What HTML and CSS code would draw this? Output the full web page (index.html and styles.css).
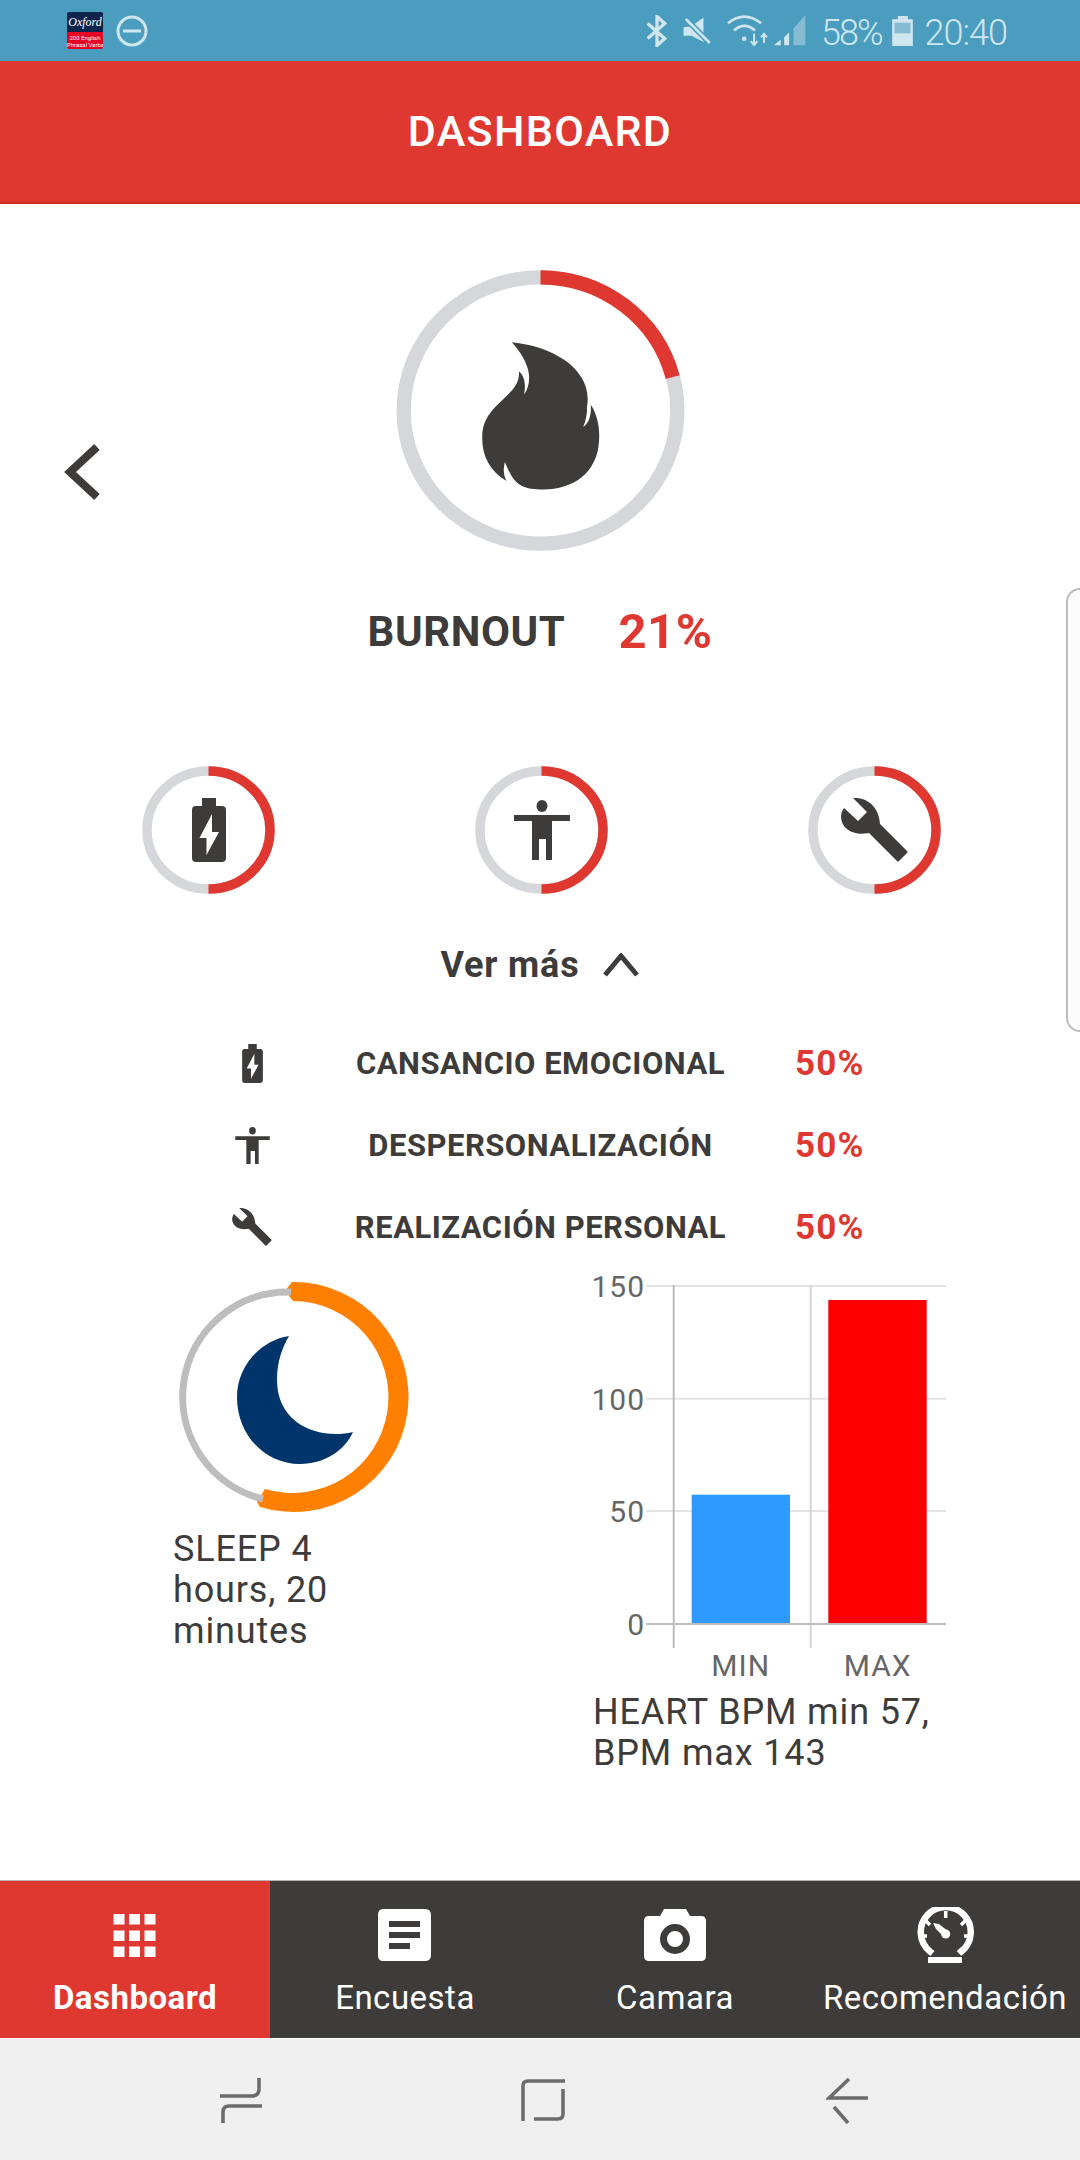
FILE: index.html
```html
<!DOCTYPE html>
<html>
<head>
  <meta charset="UTF-8">
  <title>Dashboard</title>
  <link rel="stylesheet" href="styles.css">
</head>
<body>
  <svg class="defs" width="0" height="0">
    <symbol id="icon-battery" viewBox="0 0 34 64">
      <path fill="#3d3c3a" fill-rule="evenodd" d="M10 0H24V8H30Q34 8 34 12V60Q34 64 30 64H4Q0 64 0 60V12Q0 8 4 8H10ZM20 16L7.5 40H14.5V57L27 34H20Z"/>
    </symbol>
    <symbol id="icon-person" viewBox="0 0 56 60">
      <ellipse cx="28" cy="6" rx="5.5" ry="6" fill="#3d3c3a"/>
      <path fill="#3d3c3a" d="M0 15H56V21H38V60H32V39H25V60H18V21H0Z"/>
    </symbol>
    <symbol id="icon-wrench" viewBox="0 0 67 64">
      <path fill="#3d3c3a" d="M12 0C24 -1 38 7 39 26L66 53Q67 54 66 55L58 63Q57 64 56 63L28 35C14 38 0 32 0 18Q0 14 3 10L17 23L26 14Z"/>
    </symbol>
  </svg>

  <div class="screen">
    <!-- Status bar -->
    <div class="status-bar">
      <div class="app-badge">
        <div class="badge-top">Oxford</div>
        <div class="badge-bottom">200 English<br>Phrasal Verbs</div>
      </div>
      <svg class="dnd" width="32" height="32" viewBox="0 0 32 32">
        <circle cx="16" cy="16" r="14" fill="none" stroke="#cfe6ee" stroke-width="3"/>
        <path d="M7 16H25" stroke="#cfe6ee" stroke-width="3"/>
      </svg>
      <div class="status-right">
        <svg class="st-bt" width="22" height="32" viewBox="52 45 66 95">
          <path d="M57 70L108 115L85 136V49L108 70L57 115" fill="none" stroke="#cfe6ee" stroke-width="10"/>
        </svg>
        <svg class="st-mute" width="30" height="30" viewBox="160 45 95 90">
          <path d="M165 78L190 75L228 47V125L190 105H165Z" fill="#cfe6ee"/>
          <path d="M172 52L248 128" stroke="#4a9dbf" stroke-width="18"/>
          <path d="M172 52L248 128" stroke="#cfe6ee" stroke-width="8"/>
        </svg>
        <svg class="st-wifi" width="43" height="33" viewBox="295 40 130 100">
          <path d="M301 68Q350 28 401 68M319 90Q350 62 383 90" fill="none" stroke="#cfe6ee" stroke-width="8"/>
          <circle cx="350" cy="115" r="7" fill="#cfe6ee"/>
          <path d="M380 100V132M370 122L380 134L390 122M410 128V102M401 111L410 100L419 111" fill="none" stroke="#cfe6ee" stroke-width="6"/>
        </svg>
        <svg class="st-signal" width="32" height="31" viewBox="440 45 95 92">
          <path d="M440 135L460 118V135Z" fill="#cfe6ee"/>
          <path d="M470 110L485 97V135H470Z" fill="#cfe6ee"/>
          <path d="M498 85L533 45V135H498Z" fill="#85bcd4"/>
        </svg>
        <span class="st-text st-percent">58%</span>
        <svg class="st-battery" width="21" height="30" viewBox="783 45 62 90">
          <path d="M800 45H830V55H845V135H783V55H800Z" fill="#cfe6ee"/>
          <rect x="790" y="65" width="48" height="32" fill="#85bcd4"/>
        </svg>
        <span class="st-text st-clock">20:40</span>
      </div>
    </div>

    <div class="app-header">DASHBOARD</div>

    <div class="content">
      <!-- Burnout ring -->
      <div class="hero">
        <svg class="back-arrow" width="38" height="58" viewBox="0 0 38 58">
          <polyline points="35,4 8,29 35,54" fill="none" stroke="#3d3c3a" stroke-width="8"/>
        </svg>
        <svg class="hero-ring" width="291" height="283" viewBox="165 88 874 850">
          <ellipse cx="602" cy="513" rx="411" ry="400" fill="none" stroke="#d6d7db" stroke-width="43"/>
          <path d="M602 113A411 400 0 0 1 999 413" fill="none" stroke="#df3831" stroke-width="43"/>
          <path fill="#3d3c3a" d="M516 308C640 320 760 390 742 500C742 525 738 545 730 562C750 550 755 520 753 495C775 530 780 570 778 600C775 700 700 750 610 750C540 752 520 730 495 668C490 690 490 705 500 725C450 695 425 650 427 590C428 490 545 470 537 395C555 410 558 435 553 465C575 430 580 380 516 308Z"/>
        </svg>
        <span></span>
      </div>

      <div class="burnout-title">
        <span class="burnout-name">BURNOUT</span>
        <span class="burnout-value">21%</span>
      </div>

      <!-- Sub scores -->
      <div class="mini-rings">
        <div class="mini-ring">
          <svg class="ring-svg" width="133" height="128" viewBox="0 0 133 128">
            <ellipse cx="66.5" cy="64" rx="61.5" ry="59" fill="none" stroke="#d6d7db" stroke-width="9.5"/>
            <path d="M66.5 5A61.5 59 0 0 1 66.5 123" fill="none" stroke="#df3831" stroke-width="9.5"/>
          </svg>
          <svg class="ring-icon" width="34" height="64"><use href="#icon-battery"/></svg>
        </div>
        <div class="mini-ring">
          <svg class="ring-svg" width="133" height="128" viewBox="0 0 133 128">
            <ellipse cx="66.5" cy="64" rx="61.5" ry="59" fill="none" stroke="#d6d7db" stroke-width="9.5"/>
            <path d="M66.5 5A61.5 59 0 0 1 66.5 123" fill="none" stroke="#df3831" stroke-width="9.5"/>
          </svg>
          <svg class="ring-icon" width="56" height="60"><use href="#icon-person"/></svg>
        </div>
        <div class="mini-ring">
          <svg class="ring-svg" width="133" height="128" viewBox="0 0 133 128">
            <ellipse cx="66.5" cy="64" rx="61.5" ry="59" fill="none" stroke="#d6d7db" stroke-width="9.5"/>
            <path d="M66.5 5A61.5 59 0 0 1 66.5 123" fill="none" stroke="#df3831" stroke-width="9.5"/>
          </svg>
          <svg class="ring-icon" width="67" height="64"><use href="#icon-wrench"/></svg>
        </div>
      </div>

      <div class="see-more">
        <span>Ver más</span>
        <svg width="36" height="24" viewBox="0 0 36 24">
          <polyline points="2,22 18,3 34,22" fill="none" stroke="#3d3c3a" stroke-width="5"/>
        </svg>
      </div>

      <div class="score-list">
        <div class="score-icon"><svg width="21" height="39"><use href="#icon-battery"/></svg></div>
        <div class="score-label">CANSANCIO EMOCIONAL</div>
        <div class="score-value">50%</div>
        <div class="score-icon"><svg width="35" height="37"><use href="#icon-person"/></svg></div>
        <div class="score-label">DESPERSONALIZACIÓN</div>
        <div class="score-value">50%</div>
        <div class="score-icon"><svg width="40" height="38"><use href="#icon-wrench"/></svg></div>
        <div class="score-label">REALIZACIÓN PERSONAL</div>
        <div class="score-value">50%</div>
      </div>

      <!-- Sleep and heart -->
      <div class="metrics">
        <div class="sleep">
          <svg class="sleep-ring" width="244" height="243" viewBox="172 1276 244 243">
            <path fill="#ff8000" d="M285 1291L292 1282A115 115 0 1 1 260 1507L257 1502L265 1489A96 96 0 1 0 293 1301Z"/>
            <path d="M291 1292A105 105 0 0 0 263 1499" fill="none" stroke="#bdbdbd" stroke-width="7"/>
            <path fill="#00356b" d="M289 1336C262 1340 237 1365 237 1397C237 1435 265 1464 300 1464C325 1464 345 1450 353 1432C320 1440 277 1425 277 1380C277 1362 282 1348 289 1336Z"/>
          </svg>
          <p class="metric-text">SLEEP 4 hours, 20 minutes</p>
        </div>
        <div class="heart">
          <svg class="heart-chart" width="360" height="420" viewBox="590 1270 360 420">
            <path d="M646 1286H946M646 1398.7H946M646 1511H946" stroke="#e3e3e3" stroke-width="2"/>
            <path d="M673.7 1285V1648" stroke="#bbb" stroke-width="2"/>
            <path d="M810.7 1285V1648" stroke="#d5d5d5" stroke-width="2"/>
            <rect x="691.7" y="1494.7" width="98.3" height="128.8" fill="#2e9aff"/>
            <rect x="828.3" y="1300" width="98.4" height="323.5" fill="#ff0000"/>
            <path d="M646 1624H946" stroke="#bdbdbd" stroke-width="2"/>
            <text class="axis-label" x="645" y="1297" text-anchor="end">150</text>
            <text class="axis-label" x="645" y="1409.5" text-anchor="end">100</text>
            <text class="axis-label" x="645" y="1522" text-anchor="end">50</text>
            <text class="axis-label" x="645" y="1634.5" text-anchor="end">0</text>
            <text class="axis-label" x="740.7" y="1676" text-anchor="middle">MIN</text>
            <text class="axis-label" x="877.7" y="1676" text-anchor="middle">MAX</text>
          </svg>
          <p class="metric-text">HEART BPM min 57, BPM max 143</p>
        </div>
      </div>
    </div>

    <!-- Bottom tabs -->
    <div class="tab-bar">
      <div class="tab active">
        <svg width="56" height="56" viewBox="0 0 56 56">
          <path fill="#fff" d="M6.500 7h11v10.500h-11zM22 7h11v10.500H22zM37.500 7h11v10.500h-11zM6.500 23.500h11v10.500h-11zM22 23.500h11v10.500H22zM37.500 23.500h11v10.500h-11zM6.500 39.500h11v10.500h-11zM22 39.500h11v10.500H22zM37.500 39.500h11v10.500h-11z"/>
        </svg>
        <span>Dashboard</span>
      </div>
      <div class="tab">
        <svg width="56" height="56" viewBox="0 0 56 56">
          <path fill="#fff" fill-rule="evenodd" d="M6 2H48Q54 2 54 8V48Q54 54 48 54H6Q1 54 1 48V8Q1 2 6 2ZM12 14V20H43V14ZM12 25V31H43V25ZM12 36V42H33V36Z"/>
        </svg>
        <span>Encuesta</span>
      </div>
      <div class="tab">
        <svg width="64" height="56" viewBox="0 0 64 56">
          <path fill="#fff" fill-rule="evenodd" d="M21 2H43L47 9H58Q63 9 63 14V49Q63 54 58 54H6Q1 54 1 49V14Q1 9 6 9H17ZM32 17A15 15 0 1 0 32 47A15 15 0 1 0 32 17ZM32 24A8 8 0 1 1 32 40A8 8 0 1 1 32 24Z"/>
        </svg>
        <span>Camara</span>
      </div>
      <div class="tab">
        <svg width="60" height="56" viewBox="0 0 60 56">
          <path d="M17 42L15 44.500A25 25 0 1 1 46.500 44.500L44 42" fill="none" stroke="#fff" stroke-width="6.500"/>
          <path d="M30.700 4V11M10 13L15 18M51 13L46 18M5 29H12M56 29H49" stroke="#fff" stroke-width="3.500"/>
          <path d="M18 16L24 17L34 25L29 30L21 22Z" fill="#fff"/>
          <circle cx="30.700" cy="27" r="4.500" fill="#fff"/>
          <rect x="13" y="50" width="34" height="6" fill="#fff"/>
        </svg>
        <span>Recomendación</span>
      </div>
    </div>

    <!-- Android navigation -->
    <div class="nav-bar">
      <svg width="44" height="46" viewBox="0 0 44 46">
        <path d="M40 0V11Q40 18 33 18H1M43 28H10Q4 28 4 34V45" fill="none" stroke="#6b6b6b" stroke-width="3.500"/>
      </svg>
      <svg width="46" height="44" viewBox="0 0 46 44">
        <path d="M45 3H8Q3 3 3 8V43M14 41H38Q43 41 43 36V11" fill="none" stroke="#6b6b6b" stroke-width="3.500"/>
      </svg>
      <svg class="nav-back" width="44" height="46" viewBox="0 0 44 46">
        <path d="M23 1L3 20H42M8 29L22 45" fill="none" stroke="#6b6b6b" stroke-width="3.500"/>
      </svg>
    </div>

    <div class="edge-handle"></div>
  </div>
</body>
</html>
```

FILE: styles.css
```css
/* Page */
body {
  margin: 0;
  background-color: #fff;
  font-family: Roboto, "Liberation Sans", sans-serif;
  color: #3d3c3a;
}
.defs {
  position: absolute;
}
.screen {
  position: relative;
  width: 1080px;
  height: 2160px;
  display: flex;
  flex-direction: column;
  overflow: hidden;
}

/* Status bar */
.status-bar {
  height: 61px;
  flex: none;
  box-sizing: border-box;
  padding: 1px 73px 0 67px;
  display: flex;
  align-items: center;
  background-color: #4a9dbf;
  border-bottom: 1px solid #3ba0c3;
}
.app-badge {
  width: 36px;
  height: 37px;
  border-radius: 2px;
  overflow: hidden;
  text-align: center;
  color: #fff;
}
.badge-top {
  height: 20px;
  background-color: #10254d;
  font-family: "Liberation Serif", serif;
  font-style: italic;
  font-size: 12px;
  line-height: 20px;
}
.badge-bottom {
  height: 17px;
  background-color: #e60026;
  font-size: 6px;
  line-height: 7px;
  padding-top: 2px;
  box-sizing: border-box;
  white-space: nowrap;
}
.dnd {
  margin-left: 13px;
}
.status-right {
  margin-left: auto;
  display: flex;
  align-items: center;
}
.st-mute {
  margin-left: 14px;
}
.st-wifi {
  margin-left: 14px;
}
.st-signal {
  margin-left: 5px;
}
.st-text {
  color: #cfe6ee;
  font-weight: 300;
  font-size: 36px;
  line-height: 40px;
  position: relative;
  top: 2px;
}
.st-percent {
  margin-left: 15px;
  letter-spacing: -2px;
}
.st-battery {
  margin-left: 10px;
}
.st-clock {
  margin-left: 12px;
  letter-spacing: -1px;
}

/* Header */
.app-header {
  height: 143px;
  flex: none;
  box-sizing: border-box;
  background-color: #df3831;
  border-bottom: 2px solid #cf2c26;
  color: #fff;
  font-size: 43px;
  font-weight: 500;
  letter-spacing: 1.3px;
  line-height: 141px;
  text-align: center;
}

/* Burnout */
.content {
  flex: 1;
  padding-top: 65px;
}
.hero {
  display: grid;
  grid-template-columns: 1fr auto 1fr;
}
.back-arrow {
  margin: 174px 0 0 62px;
}
.hero-ring {
  display: block;
}
.burnout-title {
  margin-top: 54px;
  height: 50px;
  display: flex;
  justify-content: center;
  align-items: center;
  gap: 53px;
}
.burnout-name {
  font-size: 42px;
  font-weight: 700;
  letter-spacing: 0.6px;
}
.burnout-value {
  font-size: 49px;
  font-weight: 700;
  letter-spacing: 0.5px;
  color: #df3831;
}

/* Sub scores */
.mini-rings {
  margin: 110px 0 0 3px;
  display: grid;
  grid-template-columns: repeat(3, 333px);
  justify-content: center;
}
.mini-ring {
  height: 128px;
  display: grid;
  place-items: center;
}
.ring-svg, .ring-icon {
  grid-area: 1 / 1;
}
.see-more {
  margin-top: 51px;
  height: 40px;
  display: flex;
  justify-content: center;
  align-items: center;
  gap: 24px;
  font-size: 36px;
  font-weight: 700;
  letter-spacing: 0.8px;
}
.score-list {
  margin: 37px 0 0 200px;
  display: grid;
  grid-template-columns: 104px 473px auto;
  grid-auto-rows: 82px;
  align-items: center;
}
.score-icon {
  display: flex;
  justify-content: center;
}
.score-label {
  font-size: 31px;
  font-weight: 700;
  letter-spacing: 0.5px;
  text-align: center;
}
.score-value {
  margin-left: 18px;
  font-size: 35px;
  font-weight: 700;
  letter-spacing: 1.2px;
  color: #df3831;
}

/* Sleep and heart */
.metrics {
  display: grid;
  grid-template-columns: 421px 1fr;
  padding: 1px 0 0 172px;
}
.sleep {
  padding-top: 7px;
}
.heart {
  padding-top: 1px;
}
.sleep-ring {
  display: block;
}
.heart-chart {
  display: block;
  margin-left: -3px;
}
.metric-text {
  margin: 2px 0 0;
  font-size: 36px;
  line-height: 41px;
  letter-spacing: 0.85px;
}
.sleep .metric-text {
  margin: 10px 0 0 1px;
  max-width: 190px;
}
.heart .metric-text {
  max-width: 350px;
}
.axis-label {
  font-size: 30px;
  letter-spacing: 1px;
  fill: #666;
}

/* Bottom tabs */
.tab-bar {
  height: 158px;
  flex: none;
  display: grid;
  grid-template-columns: repeat(4, 270px);
  background-color: #3d3c3a;
  border-top: 1px solid #b5b5b5;
  box-sizing: border-box;
}
.tab {
  display: flex;
  flex-direction: column;
  align-items: center;
  padding-top: 26px;
  gap: 17px;
  color: #fff;
  font-size: 33px;
  letter-spacing: 0.5px;
  line-height: 36px;
  white-space: nowrap;
}
.tab.active {
  background-color: #df3831;
  font-weight: 700;
}

/* Android navigation */
.nav-bar {
  height: 122px;
  flex: none;
  background-color: #efefef;
  border-top: 1px solid #fff;
  box-sizing: border-box;
  padding: 39px 0 0 90px;
  display: grid;
  grid-template-columns: repeat(3, 302px);
  justify-items: center;
  align-items: start;
  justify-content: start;
}
.nav-back {
  margin-left: 5px;
}

/* Edge panel handle, lies over the page */
.edge-handle {
  position: absolute;
  top: 588px;
  right: -14px;
  width: 24px;
  height: 440px;
  border: 2px solid #bdbdbd;
  border-radius: 14px;
  background-color: #fcfcfc;
}
```
